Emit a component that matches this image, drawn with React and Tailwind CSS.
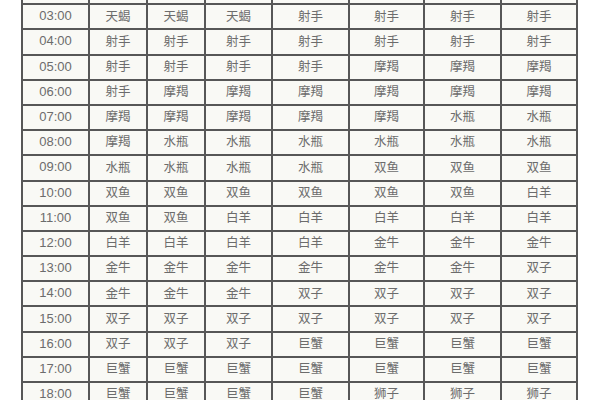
import React from "react";

const rows = [
  ["", ["", "", "", "", "", "", ""]],
  ["03:00", ["天蝎", "天蝎", "天蝎", "射手", "射手", "射手", "射手"]],
  ["04:00", ["射手", "射手", "射手", "射手", "射手", "射手", "射手"]],
  ["05:00", ["射手", "射手", "射手", "射手", "摩羯", "摩羯", "摩羯"]],
  ["06:00", ["射手", "摩羯", "摩羯", "摩羯", "摩羯", "摩羯", "摩羯"]],
  ["07:00", ["摩羯", "摩羯", "摩羯", "摩羯", "摩羯", "水瓶", "水瓶"]],
  ["08:00", ["摩羯", "水瓶", "水瓶", "水瓶", "水瓶", "水瓶", "水瓶"]],
  ["09:00", ["水瓶", "水瓶", "水瓶", "水瓶", "双鱼", "双鱼", "双鱼"]],
  ["10:00", ["双鱼", "双鱼", "双鱼", "双鱼", "双鱼", "双鱼", "白羊"]],
  ["11:00", ["双鱼", "双鱼", "白羊", "白羊", "白羊", "白羊", "白羊"]],
  ["12:00", ["白羊", "白羊", "白羊", "白羊", "金牛", "金牛", "金牛"]],
  ["13:00", ["金牛", "金牛", "金牛", "金牛", "金牛", "金牛", "双子"]],
  ["14:00", ["金牛", "金牛", "金牛", "双子", "双子", "双子", "双子"]],
  ["15:00", ["双子", "双子", "双子", "双子", "双子", "双子", "双子"]],
  ["16:00", ["双子", "双子", "双子", "巨蟹", "巨蟹", "巨蟹", "巨蟹"]],
  ["17:00", ["巨蟹", "巨蟹", "巨蟹", "巨蟹", "巨蟹", "巨蟹", "巨蟹"]],
  ["18:00", ["巨蟹", "巨蟹", "巨蟹", "巨蟹", "狮子", "狮子", "狮子"]],
];

export default function App() {
  return (
    <div className="w-[600px] h-[400px] overflow-hidden bg-white">
      {/* star sign table, scrolled so the row above 03:00 is cut off */}
      <div className="ml-[21px] -mt-[22px] w-[557px] p-[2px] bg-[#575757] grid grid-cols-[65px_56px_56px_65px_75px_73px_75px_74px] auto-rows-[23.2px] gap-[2px]">
        {rows.map(([time, signs], r) => (
          <React.Fragment key={r}>
            <div
              className="bg-[#f9f9f5] flex items-center justify-center pb-[2px] text-[13px] leading-none text-[#6c6c6c]"
              style={{ fontFamily: '"Liberation Sans", Arial, sans-serif' }}
            >
              {time}
            </div>
            {signs.map((s, i) => (
              <div
                key={i}
                className="bg-[#f9f9f5] flex items-center justify-center pb-[2px] text-[12.5px] leading-none text-[#6c6c6c]"
                style={{ fontFamily: '"Noto Sans CJK SC", "Liberation Sans", sans-serif' }}
              >
                {s}
              </div>
            ))}
          </React.Fragment>
        ))}
      </div>
    </div>
  );
}
